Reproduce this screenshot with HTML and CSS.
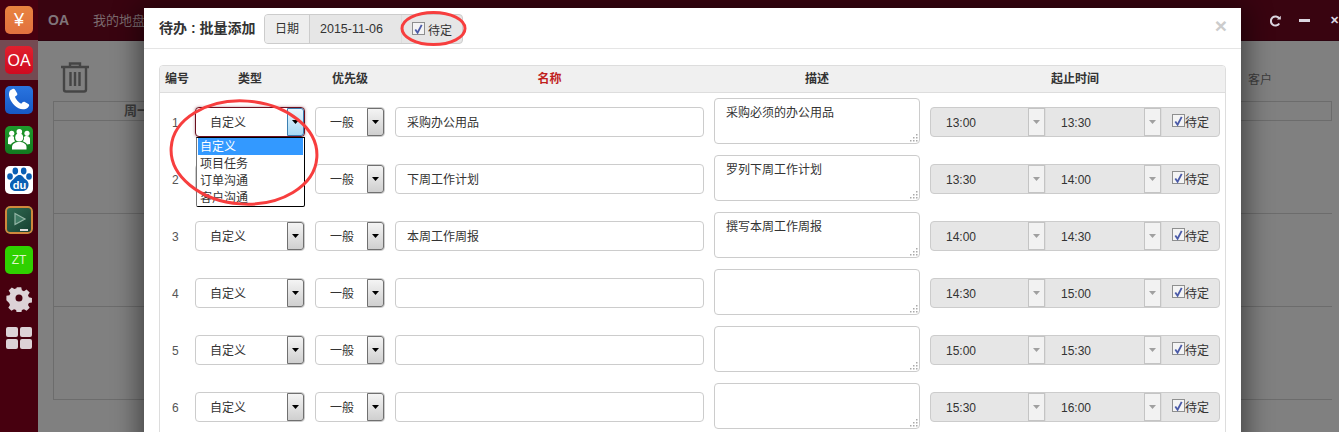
FILE: index.html
```html
<!DOCTYPE html>
<html lang="zh">
<head>
<meta charset="utf-8">
<title>待办:批量添加</title>
<link rel="stylesheet" href="styles.css">
</head>
<body>
<svg class="defs" width="0" height="0" aria-hidden="true">
  <defs>
    <symbol id="arrow" viewBox="0 0 7 4"><path d="M0 0h7L3.500 4z"/></symbol>
    <symbol id="tick" viewBox="0 0 12 12"><path d="M2.500 6.500 5 10 9.500 1.500" fill="none" stroke="#4a5aa8" stroke-width="2"/></symbol>
    <symbol id="grip" viewBox="0 0 8 8"><path d="M6 0h1.500v1.500H6zM3 3h1.500v1.500H3zM6 3h1.500v1.500H6zM0 6h1.500v1.500H0zM3 6h1.500v1.500H3zM6 6h1.500v1.500H6z" fill="#aaa"/></symbol>
  </defs>
</svg>

<div class="app">
  <aside class="dock">
    <div class="dock-item">
      <div class="tile tile-yen">¥</div>
    </div>
    <div class="dock-item dock-active">
      <div class="tile tile-oa">OA</div>
    </div>
    <div class="dock-item">
      <div class="tile tile-phone">
        <svg viewBox="0 0 28 28" width="28" height="28"><path d="M5 4.500 7.500 3c1-.5 1.800-.3 2.400.6l2.200 3.700c.5.900.3 1.700-.5 2.300l-1.700 1.200c1 2.800 3.500 5.600 6.300 7l1.400-1.500c.7-.7 1.500-.8 2.300-.3l3.500 2.100c1 .7 1 1.600.3 2.500-1.500 2.100-3.400 3.200-5.700 2.600C11.800 23 6.500 17.500 4.500 11.500 3.700 8.800 3.800 6.300 5 4.500z" fill="#fff"/></svg>
      </div>
    </div>
    <div class="dock-item">
      <div class="tile tile-team">
        <svg viewBox="0 0 28 28" width="28" height="28" fill="#fff"><circle cx="6.700" cy="7.300" r="2.600"/><circle cx="14.300" cy="5.700" r="2.800"/><circle cx="22" cy="7.300" r="2.600"/><path d="M3 18v-5c0-2 1.500-3 3.500-3 1.200 0 2 .3 2.500 1-.3 1.800.3 3.300 1.300 4.200C8 16 6.500 17 6 18.500zM25 18v-5c0-2-1.500-3-3.500-3-1.200 0-2 .3-2.500 1 .3 1.800-.3 3.300-1.300 4.200C20 16 21.500 17 22 18.500z"/><circle cx="14.200" cy="11.600" r="4"/><path d="M7 23.500v-2.500c0-3 3-5 7.200-5s7.300 2 7.300 5v2.500z"/></svg>
      </div>
    </div>
    <div class="dock-item">
      <div class="tile tile-baidu">
        <svg viewBox="0 0 28 28" width="28" height="28" fill="#0a5fb4"><ellipse cx="5" cy="10.500" rx="2.800" ry="3.200"/><ellipse cx="10.300" cy="5" rx="2.800" ry="3.400"/><ellipse cx="18.700" cy="5" rx="2.800" ry="3.400"/><ellipse cx="24" cy="10.500" rx="2.800" ry="3.200"/><path d="M14.500 9c3 0 3.500 2.500 5.500 4 2.500 1.800 4 3.500 3.500 6.500-.5 4-3.500 5.500-6 5.500h-6.500c-3 0-5.500-1.500-6-5-.4-3 1-5 3.500-6.800C10.500 11.500 11.500 9 14.500 9z"/><text x="14.500" y="22.500" class="du">du</text></svg>
      </div>
    </div>
    <div class="dock-item">
      <div class="tile tile-board">
        <svg viewBox="0 0 28 28" width="28" height="28"><defs><linearGradient id="board-fill" x1="0" y1="0" x2="1" y2="1"><stop offset="0" stop-color="#2f6b52"/><stop offset="1" stop-color="#173f30"/></linearGradient></defs><rect x="1" y="1" width="26" height="26" rx="4" fill="url(#board-fill)" stroke="#d0883c" stroke-width="2"/><path d="M10 7.500 20 13 10 18.500z" fill="#3f7a63" stroke="#93b5a5" stroke-width="1.200"/><rect x="15" y="23" width="8" height="2" fill="#ddd"/></svg>
      </div>
    </div>
    <div class="dock-item">
      <div class="tile tile-zt">ZT</div>
    </div>
    <div class="dock-item">
      <svg class="dock-glyph" viewBox="0 0 26 26" width="26" height="26"><path fill="#dcd2d6" fill-rule="evenodd" d="M10.500 1h5l.7 3.400 2.300 1 2.900-1.900 3.500 3.500-1.900 2.900 1 2.300 3.400.7v5l-3.400.7-1 2.300 1.900 2.900-3.500 3.500-2.900-1.900-2.300 1-.7 3.400h-5l-.7-3.400-2.300-1-2.900 1.900-3.500-3.500 1.900-2.900-1-2.300L-1 15.600v-5l3.400-.7 1-2.300-1.900-2.900 3.500-3.500 2.900 1.900 2.300-1zM13 9.200a3.900 3.900 0 1 0 0 7.800 3.900 3.900 0 0 0 0-7.800z" transform="translate(1.300 .3) scale(.9)"/></svg>
    </div>
    <div class="dock-item">
      <div class="apps"><i></i><i></i><i></i><i></i></div>
    </div>
  </aside>

  <div class="desk">
    <header class="topbar">
      <span class="brand">OA</span>
      <span class="menu">我的地盘</span>
      <div class="win-btns">
        <svg viewBox="0 0 14 14" width="14" height="14"><path d="M11.800 3.800A5.800 5.800 0 1 0 11.800 10.200" fill="none" stroke="#dcd6e0" stroke-width="2.600"/><path d="M8.800 5.200h5V.2z" fill="#dcd6e0"/></svg>
        <span class="win-min"></span>
        <span class="win-x">✕</span>
      </div>
    </header>
    <main class="page">
      <svg class="trash" viewBox="0 0 30 32" width="30" height="32"><path d="M1 6h28M10 5V2.500h10V5M4 6v22.500a2 2 0 0 0 2 2h18a2 2 0 0 0 2-2V6M10.500 11v14M15 11v14M19.500 11v14" fill="none" stroke="#454545" stroke-width="2.400"/></svg>
      <div class="week">
        <div class="week-head"><span>周一</span><span class="week-client">客户</span></div>
        <div class="week-row"></div>
        <div class="week-row"></div>
        <div class="week-row"></div>
      </div>
    </main>
  </div>
</div>

<section class="modal">
  <header class="modal-head">
    <h1 class="modal-title">待办 : 批量添加</h1>
    <div class="date-group">
      <span class="addon">日期</span>
      <span class="date-value">2015-11-06</span>
      <label class="pending pending-date"><span class="check"><svg width="12" height="12"><use href="#tick"/></svg></span>待定</label>
    </div>
    <span class="close">×</span>
  </header>
  <div class="sheet">
    <div class="sheet-row sheet-head">
      <div class="c-no">编号</div>
      <div class="c-type">类型</div>
      <div class="c-pri">优先级</div>
      <div class="c-name required">名称</div>
      <div class="c-desc">描述</div>
      <div class="c-time">起止时间</div>
    </div>

    <div class="sheet-row">
      <div class="c-no">1</div>
      <div class="c-type"><div class="select select-open">自定义<span class="select-btn"><svg width="7" height="4"><use href="#arrow"/></svg></span></div></div>
      <div class="c-pri"><div class="select">一般<span class="select-btn"><svg width="7" height="4"><use href="#arrow"/></svg></span></div></div>
      <div class="c-name"><div class="input">采购办公用品</div></div>
      <div class="c-desc"><div class="textarea">采购必须的办公用品<svg class="grip" width="8" height="8"><use href="#grip"/></svg></div></div>
      <div class="c-time"><div class="time-group"><div class="time">13:00<span class="time-btn"><svg width="7" height="4"><use href="#arrow"/></svg></span></div><div class="time">13:30<span class="time-btn"><svg width="7" height="4"><use href="#arrow"/></svg></span></div><label class="pending"><span class="check"><svg width="12" height="12"><use href="#tick"/></svg></span>待定</label></div></div>
    </div>

    <div class="sheet-row">
      <div class="c-no">2</div>
      <div class="c-type"><div class="select">自定义<span class="select-btn"><svg width="7" height="4"><use href="#arrow"/></svg></span></div></div>
      <div class="c-pri"><div class="select">一般<span class="select-btn"><svg width="7" height="4"><use href="#arrow"/></svg></span></div></div>
      <div class="c-name"><div class="input">下周工作计划</div></div>
      <div class="c-desc"><div class="textarea">罗列下周工作计划<svg class="grip" width="8" height="8"><use href="#grip"/></svg></div></div>
      <div class="c-time"><div class="time-group"><div class="time">13:30<span class="time-btn"><svg width="7" height="4"><use href="#arrow"/></svg></span></div><div class="time">14:00<span class="time-btn"><svg width="7" height="4"><use href="#arrow"/></svg></span></div><label class="pending"><span class="check"><svg width="12" height="12"><use href="#tick"/></svg></span>待定</label></div></div>
    </div>

    <div class="sheet-row">
      <div class="c-no">3</div>
      <div class="c-type"><div class="select">自定义<span class="select-btn"><svg width="7" height="4"><use href="#arrow"/></svg></span></div></div>
      <div class="c-pri"><div class="select">一般<span class="select-btn"><svg width="7" height="4"><use href="#arrow"/></svg></span></div></div>
      <div class="c-name"><div class="input">本周工作周报</div></div>
      <div class="c-desc"><div class="textarea">撰写本周工作周报<svg class="grip" width="8" height="8"><use href="#grip"/></svg></div></div>
      <div class="c-time"><div class="time-group"><div class="time">14:00<span class="time-btn"><svg width="7" height="4"><use href="#arrow"/></svg></span></div><div class="time">14:30<span class="time-btn"><svg width="7" height="4"><use href="#arrow"/></svg></span></div><label class="pending"><span class="check"><svg width="12" height="12"><use href="#tick"/></svg></span>待定</label></div></div>
    </div>

    <div class="sheet-row">
      <div class="c-no">4</div>
      <div class="c-type"><div class="select">自定义<span class="select-btn"><svg width="7" height="4"><use href="#arrow"/></svg></span></div></div>
      <div class="c-pri"><div class="select">一般<span class="select-btn"><svg width="7" height="4"><use href="#arrow"/></svg></span></div></div>
      <div class="c-name"><div class="input"></div></div>
      <div class="c-desc"><div class="textarea"><svg class="grip" width="8" height="8"><use href="#grip"/></svg></div></div>
      <div class="c-time"><div class="time-group"><div class="time">14:30<span class="time-btn"><svg width="7" height="4"><use href="#arrow"/></svg></span></div><div class="time">15:00<span class="time-btn"><svg width="7" height="4"><use href="#arrow"/></svg></span></div><label class="pending"><span class="check"><svg width="12" height="12"><use href="#tick"/></svg></span>待定</label></div></div>
    </div>

    <div class="sheet-row">
      <div class="c-no">5</div>
      <div class="c-type"><div class="select">自定义<span class="select-btn"><svg width="7" height="4"><use href="#arrow"/></svg></span></div></div>
      <div class="c-pri"><div class="select">一般<span class="select-btn"><svg width="7" height="4"><use href="#arrow"/></svg></span></div></div>
      <div class="c-name"><div class="input"></div></div>
      <div class="c-desc"><div class="textarea"><svg class="grip" width="8" height="8"><use href="#grip"/></svg></div></div>
      <div class="c-time"><div class="time-group"><div class="time">15:00<span class="time-btn"><svg width="7" height="4"><use href="#arrow"/></svg></span></div><div class="time">15:30<span class="time-btn"><svg width="7" height="4"><use href="#arrow"/></svg></span></div><label class="pending"><span class="check"><svg width="12" height="12"><use href="#tick"/></svg></span>待定</label></div></div>
    </div>

    <div class="sheet-row">
      <div class="c-no">6</div>
      <div class="c-type"><div class="select">自定义<span class="select-btn"><svg width="7" height="4"><use href="#arrow"/></svg></span></div></div>
      <div class="c-pri"><div class="select">一般<span class="select-btn"><svg width="7" height="4"><use href="#arrow"/></svg></span></div></div>
      <div class="c-name"><div class="input"></div></div>
      <div class="c-desc"><div class="textarea"><svg class="grip" width="8" height="8"><use href="#grip"/></svg></div></div>
      <div class="c-time"><div class="time-group"><div class="time">15:30<span class="time-btn"><svg width="7" height="4"><use href="#arrow"/></svg></span></div><div class="time">16:00<span class="time-btn"><svg width="7" height="4"><use href="#arrow"/></svg></span></div><label class="pending"><span class="check"><svg width="12" height="12"><use href="#tick"/></svg></span>待定</label></div></div>
    </div>
  </div>
</section>

<ul class="dropdown">
  <li class="dropdown-on">自定义</li>
  <li>项目任务</li>
  <li>订单沟通</li>
  <li>客户沟通</li>
</ul>

<svg class="ring ring-date" viewBox="0 0 70 38" width="70" height="38"><ellipse cx="35.500" cy="18.500" rx="31.500" ry="16"/></svg>
<svg class="ring ring-type" viewBox="0 0 156 112" width="156" height="112"><ellipse cx="76" cy="55.500" rx="73" ry="51.500" transform="rotate(4 76 55.500)"/></svg>
</body>
</html>
```

FILE: styles.css
```css
* { box-sizing: border-box; }
html, body { margin: 0; height: 100%; overflow: hidden; }
body { font: 12px/17px "Liberation Sans", "Noto Sans CJK SC", sans-serif; color: #333; background: #808080; }
.defs { position: absolute; }

.app { display: flex; height: 432px; }
.dock { width: 38px; flex: none; background: #47000f; display: flex; flex-direction: column; }
.dock-item { height: 40px; flex: none; display: flex; align-items: center; justify-content: center; }
.dock-active { background: #744a52; }
.tile { width: 28px; height: 28px; border-radius: 5px; overflow: hidden; display: flex; align-items: center; justify-content: center; color: #fff; }
.tile-yen { background: linear-gradient(#e8833f, #e2713f); font-size: 18px; }
.tile-oa { background: linear-gradient(#e0202e, #cf0a20); font-size: 16px; }
.tile-phone { background: linear-gradient(#2a75e0, #1658c4); }
.tile-team { background: linear-gradient(#1f9a2c, #127a20); }
.tile-baidu { background: #fff; }
.tile-board { background: #1f4f3c; }
.tile-zt { background: #2fd100; font-size: 12px; color: #dff5c8; }
.du { font: bold 11px "Liberation Sans", sans-serif; fill: #fff; text-anchor: middle; }
.dock-glyph { margin-top: -2px; }
.apps { display: grid; grid-template-columns: 12px 12px; gap: 2px; margin-top: -4px; }
.apps i { height: 10px; background: #dcd2d6; border-radius: 2px; }

.desk { flex: 1; display: flex; flex-direction: column; min-width: 0; }
.topbar { height: 41px; flex: none; background: #390410; border-bottom: 1px solid #2e0410; display: flex; align-items: center; color: #7b6a6e; }
.brand { font-size: 14px; font-weight: bold; margin-left: 10px; width: 45px; color: #80757a; }
.menu { font-size: 13px; }
.win-btns { margin-left: auto; display: flex; align-items: center; gap: 18px; flex: none; width: 69px; color: #dcd6e0; margin-top: 1px; }
.win-min { width: 11px; height: 3px; background: #dcd6e0; flex: none; }
.win-x { font-size: 11px; font-weight: bold; margin-left: 2px; flex: none; }
.page { flex: 1; padding: 20px 7px 0 15px; position: relative; }
.trash { display: block; margin-left: 7px; }
.week { margin: 8px 0 0 0; border-left: 1px solid #6c6c6c; }
.week-head { height: 20px; border: 1px solid #6c6c6c; border-left: 0; display: flex; padding-left: 70px; font-weight: bold; color: #3d3d3d; font-size: 13px; }
.week-client { margin-left: auto; margin-right: 59px; font-weight: normal; margin-top: -30px; font-size: 12px; }
.week-row { height: 93px; border-bottom: 1px solid #6c6c6c; }

.modal { position: absolute; left: 144px; top: 8px; width: 1097px; height: 440px; background: #fff; box-shadow: 0 5px 24px 6px rgba(0, 0, 0, .45); }
.modal-head { height: 41px; border-bottom: 1px solid #e5e5e5; display: flex; align-items: center; padding: 0 15px; }
.modal-title { margin: 0; font-size: 14px; font-weight: bold; color: #333; width: 105px; white-space: nowrap; }
.date-group { display: flex; height: 30px; border: 1px solid #ccc; border-radius: 4px; background: #e6e6e6; align-items: stretch; margin-top: 1px; }
.addon { width: 45px; background: #eee; display: flex; align-items: center; justify-content: center; border-right: 1px solid #ccc; border-radius: 3px 0 0 3px; font-size: 12px; padding-top: 2px; }
.date-value { width: 92px; padding: 2px 0 0 10px; display: flex; align-items: center; border-right: 1px solid #ddd; font-size: 12.500px; }
.close { margin-left: auto; color: #ccc; font: bold 21px/1 "Liberation Sans", sans-serif; margin-right: -1px; margin-top: -5px; }

.pending { display: flex; align-items: center; padding: 4px 0 0 10px; font-size: 12px; white-space: nowrap; }
.pending-date { padding: 5px 10px 0 10px; }
.check { width: 13px; height: 13px; border: 1px solid #8e8f8f; background: #f4f4f4; margin: -6px 0 0 0; flex: none; display: flex; align-items: center; justify-content: center; }
.pending-date .check { margin: -5px 3px 0 0; }

.sheet { margin: 16px 15px 0 15px; border: 1px solid #ddd; border-radius: 4px 4px 0 0; }
.sheet-row { display: flex; height: 57px; align-items: center; padding-left: 5px; }
.sheet-head { height: 27px; background: #f0f0f0; border-bottom: 1px solid #ddd; font-weight: bold; font-size: 12px; border-radius: 3px 3px 0 0; }
.c-no { width: 30px; flex: none; }
.sheet-row:not(.sheet-head) .c-no { padding: 4px 0 0 7px; color: #555; font-size: 12px; }
.c-type { width: 120px; flex: none; }
.c-pri { width: 80px; flex: none; }
.c-name { width: 319px; flex: none; }
.c-desc { width: 216px; flex: none; }
.c-time { width: 290px; flex: none; }
.sheet-head > div { text-align: center; }
.sheet-head .c-no { text-align: left; }
.sheet-head .c-type { padding-right: 10px; }
.sheet-head .c-pri { padding-right: 10px; }
.sheet-head .c-name { padding-right: 10px; }
.sheet-head .c-desc { padding-right: 10px; }
.required { color: #c0211c; }

.select { height: 30px; border: 1px solid #ccc; border-radius: 4px; display: flex; align-items: center; padding: 4px 0 0 14px; position: relative; background: #fff; font-size: 12px; }
.c-type .select { width: 110px; }
.c-pri .select { width: 70px; }
.select-btn { position: absolute; right: 0; top: 0; bottom: 0; width: 17px; border: 1px solid #707070; border-radius: 0 3px 3px 0; background: linear-gradient(#f4f4f4, #cfcfcf); display: flex; align-items: center; justify-content: center; }
.select-open { border-color: #6b0f1e; box-shadow: 0 0 3px rgba(107, 15, 30, .5); }
.select-open .select-btn { border-color: #3c7fb1; background: linear-gradient(#eaf6fd, #a7d9f5); }
.input { width: 309px; height: 30px; border: 1px solid #ccc; border-radius: 4px; display: flex; align-items: center; padding: 4px 0 0 11px; background: #fff; }
.textarea { width: 206px; height: 46px; border: 1px solid #ccc; border-radius: 4px; padding: 6px 11px; position: relative; background: #fff; margin-top: -2px; }
.grip { position: absolute; right: 1px; bottom: 1px; }

.time-group { display: flex; width: 290px; height: 30px; border: 1px solid #ccc; border-radius: 4px; background: #e6e6e6; }
.time { width: 115px; flex: none; display: flex; align-items: center; padding: 4px 0 0 15px; border-right: 1px solid #ddd; position: relative; }
.time + .time { width: 116px; }
.time-btn { position: absolute; right: 0; top: 0; bottom: 0; width: 17px; background: #f2f2f2; border: 1px solid #c4c4c4; display: flex; align-items: center; justify-content: center; }
.time-btn svg { fill: #a0a0a0; }

.dropdown { position: absolute; left: 196px; top: 137px; width: 109px; height: 70px; margin: 0; padding: 0 1px; list-style: none; background: #fff; border: 1px solid #000; border-left-color: #777; border-radius: 0 0 2px 2px; overflow: hidden; }
.dropdown li { height: 17px; line-height: 18px; padding-left: 2px; color: #333; }
.dropdown .dropdown-on { background: #39f; color: #fff; }

.ring { position: absolute; fill: none; stroke: #f73e3e; stroke-width: 3; pointer-events: none; }
.ring-date { left: 398px; top: 10px; }
.ring-type { left: 168px; top: 97px; }
```
